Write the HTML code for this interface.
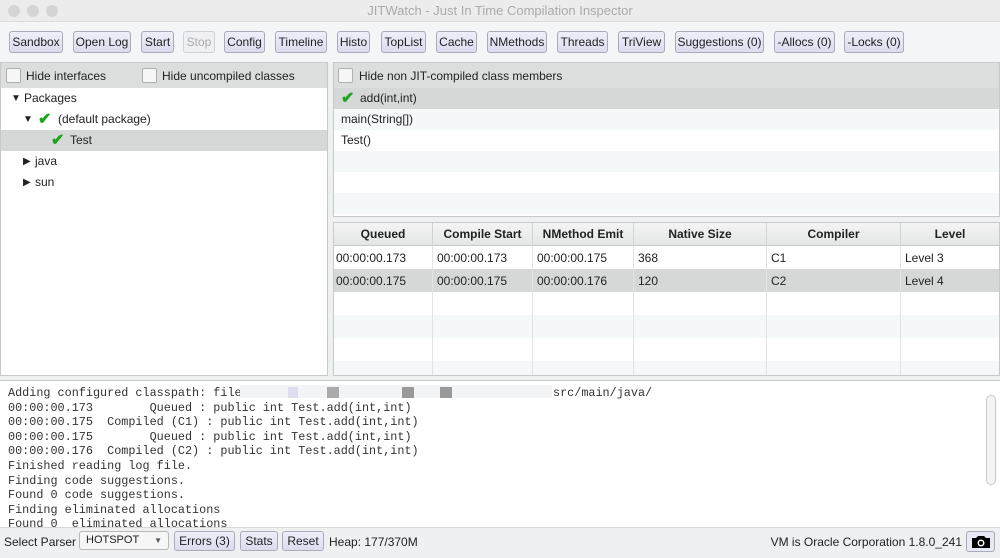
<!DOCTYPE html>
<html><head><style>
*{box-sizing:border-box;margin:0;padding:0}
body{width:1000px;height:558px;overflow:hidden;background:#eef0f1;font-family:"Liberation Sans",sans-serif;font-size:12px;color:#222;position:relative}
.abs{position:absolute;white-space:nowrap}
.btn{position:absolute;top:31px;height:22px;border:1px solid #a9abb8;border-radius:3px;background:linear-gradient(#eeeefa,#dcdcef);font-size:12px;line-height:20px;text-align:center;color:#222;white-space:nowrap;overflow:hidden}
.cb{position:absolute;width:15px;height:15px;border:1px solid #b0b0b0;border-radius:2px;background:#f6f6f6}
.chk{position:absolute;color:#1aa51a;font-size:16px;font-weight:bold;line-height:16px}
.row{position:absolute;left:0;right:0;height:21px;line-height:21px}
.mono{font-family:"Liberation Mono",monospace;font-size:11.8px;color:#333;white-space:pre;line-height:14.6px}
.th{position:absolute;top:223px;height:23px;line-height:23px;text-align:center;font-weight:bold;font-size:12px;border-right:1px solid #d0d2d2}
.td{position:absolute;height:22px;line-height:22px;padding-left:3px;border-right:1px solid #e2e4e4}
.t{font-size:12px}
</style></head><body>
<div class="abs" style="left:0;top:0;width:1000px;height:22px;background:#ececec;border-bottom:1px solid #dcdcdc"></div>
<div class="abs" style="left:8px;top:5px;width:12px;height:12px;border-radius:6px;background:#d4d4d4"></div>
<div class="abs" style="left:27px;top:5px;width:12px;height:12px;border-radius:6px;background:#d4d4d4"></div>
<div class="abs" style="left:46px;top:5px;width:12px;height:12px;border-radius:6px;background:#d4d4d4"></div>
<div class="abs" style="left:0;width:1000px;top:3px;text-align:center;color:#aaa;font-size:13px">JITWatch - Just In Time Compilation Inspector</div>
<div class="abs" style="left:0;top:22px;width:1000px;height:40px;background:#f3f5f6"></div>
<div class="btn" style="left:9px;width:54px">Sandbox</div>
<div class="btn" style="left:73px;width:58px">Open Log</div>
<div class="btn" style="left:141px;width:33px">Start</div>
<div class="btn" style="left:183px;width:32px;color:#aaa;background:#f0f0f4;border-color:#d0d0d8">Stop</div>
<div class="btn" style="left:224px;width:41px">Config</div>
<div class="btn" style="left:275px;width:52px">Timeline</div>
<div class="btn" style="left:337px;width:33px">Histo</div>
<div class="btn" style="left:381px;width:45px">TopList</div>
<div class="btn" style="left:436px;width:41px">Cache</div>
<div class="btn" style="left:487px;width:60px">NMethods</div>
<div class="btn" style="left:557px;width:51px">Threads</div>
<div class="btn" style="left:618px;width:47px">TriView</div>
<div class="btn" style="left:675px;width:89px">Suggestions (0)</div>
<div class="btn" style="left:774px;width:61px">-Allocs (0)</div>
<div class="btn" style="left:844px;width:60px">-Locks (0)</div>

<div class="abs" style="left:0;top:62px;width:328px;height:314px;background:#fff;border:1px solid #c8caca">
 <div class="abs" style="left:0;top:0;width:326px;height:25px;background:#dcdede"></div>
 <div class="cb" style="left:5px;top:5px"></div><div class="abs t" style="left:25px;top:6px">Hide interfaces</div>
 <div class="cb" style="left:141px;top:5px"></div><div class="abs t" style="left:161px;top:6px">Hide uncompiled classes</div>
 <div class="row" style="top:25px"><span class="abs" style="left:10px;font-size:10px">▼</span><span class="abs t" style="left:23px">Packages</span></div>
 <div class="row" style="top:46px"><span class="abs" style="left:22px;font-size:10px">▼</span><span class="chk" style="left:37px;top:3px">✔</span><span class="abs t" style="left:57px">(default package)</span></div>
 <div class="row" style="top:67px;background:#d6d8d8"><span class="chk" style="left:50px;top:3px">✔</span><span class="abs t" style="left:69px">Test</span></div>
 <div class="row" style="top:88px"><span class="abs" style="left:22px;font-size:10px">▶</span><span class="abs t" style="left:34px">java</span></div>
 <div class="row" style="top:109px"><span class="abs" style="left:22px;font-size:10px">▶</span><span class="abs t" style="left:34px">sun</span></div>
</div>

<div class="abs" style="left:333px;top:62px;width:667px;height:155px;background:#fff;border:1px solid #c8caca">
 <div class="abs" style="left:0;top:0;width:665px;height:25px;background:#dcdede"></div>
 <div class="cb" style="left:4px;top:5px"></div><div class="abs t" style="left:25px;top:6px">Hide non JIT-compiled class members</div>
 <div class="row" style="top:25px;background:#d6d8d8"><span class="chk" style="left:7px;top:3px">✔</span><span class="abs t" style="left:26px">add(int,int)</span></div>
 <div class="row" style="top:46px;background:#f5f8f9"><span class="abs t" style="left:7px">main(String[])</span></div>
 <div class="row" style="top:67px"><span class="abs t" style="left:7px">Test()</span></div>
 <div class="row" style="top:88px;background:#f5f8f9"></div>
 <div class="row" style="top:130px;background:#f5f8f9"></div>
</div>

<div class="abs" style="left:333px;top:222px;width:667px;height:154px;background:#fff;border:1px solid #c8caca"></div>
<div class="abs" style="left:334px;top:223px;width:665px;height:23px;background:linear-gradient(#f4f4f4,#e4e6e6);border-bottom:1px solid #c8caca"></div>
<div class="th" style="left:334px;width:99px">Queued</div>
<div class="th" style="left:433px;width:100px">Compile Start</div>
<div class="th" style="left:533px;width:101px">NMethod Emit</div>
<div class="th" style="left:634px;width:133px">Native Size</div>
<div class="th" style="left:767px;width:134px">Compiler</div>
<div class="th" style="left:901px;width:98px;border:none">Level</div>
<div class="abs" style="left:334px;top:269px;width:665px;height:23px;background:#d6d8d8"></div>
<div class="abs" style="left:334px;top:315px;width:665px;height:23px;background:#f5f8f9"></div>
<div class="abs" style="left:334px;top:361px;width:665px;height:14px;background:#f5f8f9"></div>
<div class="td" style="left:334px;top:246px;width:99px;height:129px"></div>
<div class="td" style="left:433px;top:246px;width:100px;height:129px"></div>
<div class="td" style="left:533px;top:246px;width:101px;height:129px"></div>
<div class="td" style="left:634px;top:246px;width:133px;height:129px"></div>
<div class="td" style="left:767px;top:246px;width:134px;height:129px"></div>
<div class="abs" style="left:336px;top:251px">00:00:00.173</div><div class="abs" style="left:437px;top:251px">00:00:00.173</div><div class="abs" style="left:537px;top:251px">00:00:00.175</div><div class="abs" style="left:638px;top:251px">368</div><div class="abs" style="left:771px;top:251px">C1</div><div class="abs" style="left:905px;top:251px">Level 3</div>
<div class="abs" style="left:336px;top:274px">00:00:00.175</div><div class="abs" style="left:437px;top:274px">00:00:00.175</div><div class="abs" style="left:537px;top:274px">00:00:00.176</div><div class="abs" style="left:638px;top:274px">120</div><div class="abs" style="left:771px;top:274px">C2</div><div class="abs" style="left:905px;top:274px">Level 4</div>

<div class="abs" style="left:0;top:380px;width:1000px;height:147px;background:#fff;border-top:1px solid #c8caca;overflow:hidden">
<div class="mono abs" style="left:8px;top:5px">Adding configured classpath: file
00:00:00.173        Queued : public int Test.add(int,int)
00:00:00.175  Compiled (C1) : public int Test.add(int,int)
00:00:00.175        Queued : public int Test.add(int,int)
00:00:00.176  Compiled (C2) : public int Test.add(int,int)
Finished reading log file.
Finding code suggestions.
Found 0 code suggestions.
Finding eliminated allocations
Found 0  eliminated allocations</div>
<div class="mono abs" style="left:553px;top:5px">src/main/java/</div>
<div class="abs" style="left:240px;top:4px;width:312px;height:13px;background:#f2f4f6"></div>
<div class="abs" style="left:327px;top:6px;width:12px;height:11px;background:#aaa"></div>
<div class="abs" style="left:402px;top:6px;width:12px;height:11px;background:#999"></div>
<div class="abs" style="left:440px;top:6px;width:12px;height:11px;background:#999"></div>
<div class="abs" style="left:288px;top:6px;width:10px;height:11px;background:#dde"></div>
<div class="abs" style="left:986px;top:14px;width:10px;height:90px;border:1px solid #c8c8c8;border-radius:5px;background:#f4f4f4"></div>
</div>

<div class="abs" style="left:0;top:527px;width:1000px;height:31px;background:#eef0f1;border-top:1px solid #d6d8d8"></div>
<div class="abs" style="left:4px;top:535px;font-size:12px">Select Parser</div>
<div class="abs" style="left:79px;top:531px;width:90px;height:19px;border:1px solid #b8b8b8;border-radius:3px;background:#f6f6f6;font-size:11px;line-height:17px;padding-left:6px">HOTSPOT<span class="abs" style="right:6px;font-size:8px;color:#555">▼</span></div>
<div class="btn" style="left:174px;top:531px;width:61px;height:20px;line-height:18px">Errors (3)</div>
<div class="btn" style="left:240px;top:531px;width:38px;height:20px;line-height:18px">Stats</div>
<div class="btn" style="left:282px;top:531px;width:42px;height:20px;line-height:18px">Reset</div>
<div class="abs" style="left:329px;top:535px;font-size:12px">Heap: 177/370M</div>
<div class="abs" style="right:38px;top:535px;font-size:12px">VM is Oracle Corporation 1.8.0_241</div>
<div class="btn" style="left:966px;top:531px;width:29px;height:21px;background:#e8e8f4">
<svg width="20" height="14" viewBox="0 0 20 14" style="margin-top:3px"><path d="M1 3h4l2-2h6l2 2h4v10H1z" fill="#000"/><circle cx="10" cy="8" r="3.5" fill="#fff"/><circle cx="10" cy="8" r="2" fill="#000"/></svg></div>
</body></html>
